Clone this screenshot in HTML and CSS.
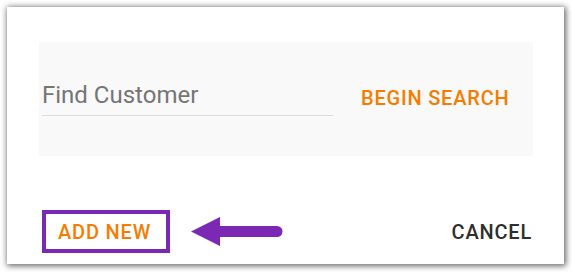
FILE: index.html
```html
<!DOCTYPE html>
<html>
<head>
<meta charset="utf-8">
<link rel="stylesheet" href="styles.css">
</head>
<body>
<div class="card">
  <div class="panel">
    <div class="field">Find Customer</div>
    <div class="btn orange">BEGIN SEARCH</div>
  </div>
  <div class="footer">
    <div class="left">
      <div class="highlight"><span class="btn orange">ADD NEW</span></div>
      <svg class="arrow" width="94" height="32" viewBox="0 0 94 32">
        <polygon points="0,15.5 29,1 29,30" fill="#7b29b5"/>
        <line x1="27" y1="15.5" x2="86" y2="15.5" stroke="#7b29b5" stroke-width="11" stroke-linecap="round"/>
      </svg>
    </div>
    <div class="btn dark">CANCEL</div>
  </div>
</div>
</body>
</html>
```
FILE: styles.css
```css
html, body {
  margin: 0;
  padding: 0;
  background: #ffffff;
}
body {
  font-family: Roboto, "Liberation Sans", sans-serif;
  width: 572px;
  height: 272px;
  overflow: hidden;
}
.card {
  margin: 7px 0 0 7px;
  width: 557px;
  height: 257px;
  box-sizing: border-box;
  padding: 35px 31px 0 32px;
  background: #ffffff;
  box-shadow: 1px 1px 6px 1px rgba(0, 0, 0, 0.6);
}
.panel {
  height: 114px;
  background: #f9f9f9;
  display: flex;
  align-items: center;
  padding-left: 3px;
}
.field {
  width: 291px;
  font-size: 24px;
  color: #757575;
  border-bottom: 1px solid #dcdcdc;
  padding-bottom: 6px;
  margin-top: -1px;
  line-height: 28px;
}
.btn {
  font-size: 20px;
  font-weight: 500;
  letter-spacing: 0.8px;
  white-space: nowrap;
}
.panel .btn {
  margin-left: 28px;
  margin-top: -2px;
}
.orange {
  color: #f57c00;
}
.dark {
  color: #2e2e2e;
}
.footer {
  margin-top: 54px;
  display: flex;
  align-items: center;
  justify-content: space-between;
  padding: 0 1px 0 3px;
}
.left {
  display: flex;
  align-items: center;
}
.highlight {
  width: 128px;
  height: 43px;
  box-sizing: border-box;
  border: 4px solid #7b29b5;
  display: flex;
  align-items: center;
  padding-left: 12px;
}
.arrow {
  margin-left: 21px;
  display: block;
}
```
